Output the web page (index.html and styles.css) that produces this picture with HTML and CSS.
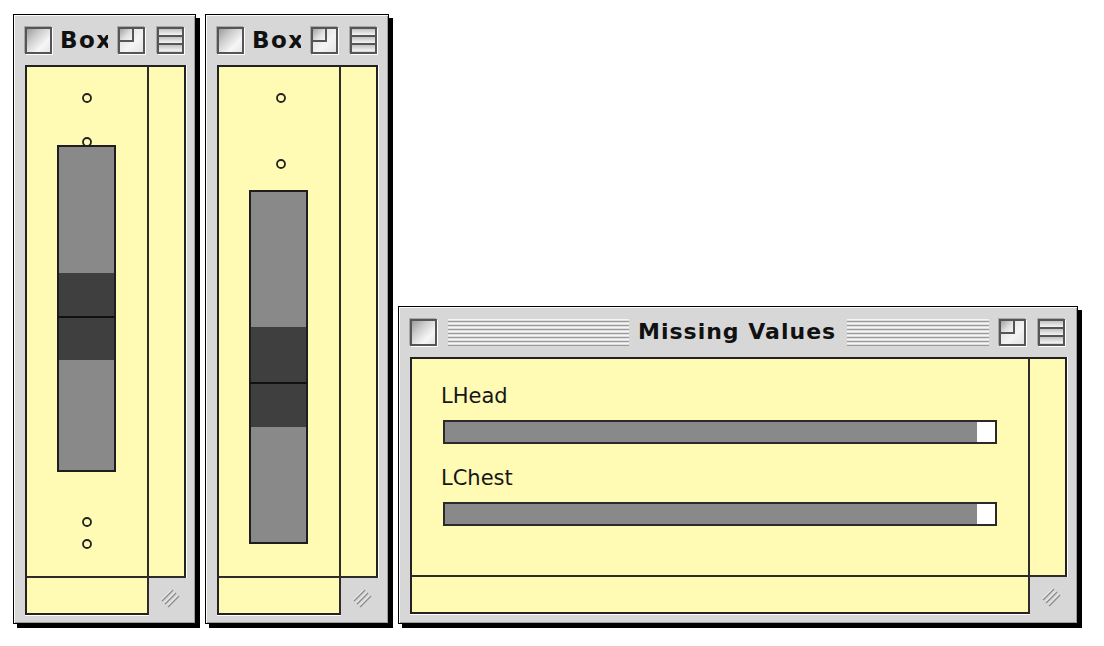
FILE: index.html
```html
<!DOCTYPE html>
<html>
<head>
<meta charset="utf-8">
<link rel="stylesheet" href="styles.css">
</head>
<body>
<div class="win win1">
  <div class="tb">
    <div class="btn cbox"></div>
    <div class="ttl ttl-clip"><span class="title title-wide">Box</span></div>
    <div class="btn zbox"><div class="zin"></div></div>
    <div class="btn sbox"><i></i><i></i><i></i></div>
  </div>
  <div class="content">
    <div class="pane">
      <svg class="plot" width="120" height="509" viewBox="0 0 120 509">
        <rect x="31" y="79" width="57" height="325" fill="#898989" stroke="#1e1e1e" stroke-width="2"/>
        <rect x="32" y="206" width="55" height="87" fill="#3f3f3f"/>
        <line x1="31" y1="250" x2="88" y2="250" stroke="#111" stroke-width="2"/>
        <circle cx="60" cy="31" r="4" fill="none" stroke="#222" stroke-width="1.8"/>
        <circle cx="60" cy="75" r="4" fill="none" stroke="#222" stroke-width="1.8"/>
        <circle cx="60" cy="455" r="4" fill="none" stroke="#222" stroke-width="1.8"/>
        <circle cx="60" cy="477" r="4" fill="none" stroke="#222" stroke-width="1.8"/>
      </svg>
    </div>
    <div class="vtrack"></div>
    <div class="htrack"></div>
    <div class="grow"><svg width="22" height="22" viewBox="0 0 22 22"><g stroke-width="1.4"><line x1="3" y1="13" x2="13" y2="3" stroke="#fff"/><line x1="3" y1="14" x2="14" y2="3" stroke="#8a8a8a"/><line x1="6" y1="16" x2="16" y2="6" stroke="#fff"/><line x1="6" y1="17" x2="17" y2="6" stroke="#8a8a8a"/><line x1="9" y1="19" x2="19" y2="9" stroke="#fff"/><line x1="9" y1="20" x2="20" y2="9" stroke="#8a8a8a"/></g></svg></div>
  </div>
</div>

<div class="win win2">
  <div class="tb">
    <div class="btn cbox"></div>
    <div class="ttl ttl-clip"><span class="title title-wide">Box</span></div>
    <div class="btn zbox"><div class="zin"></div></div>
    <div class="btn sbox"><i></i><i></i><i></i></div>
  </div>
  <div class="content">
    <div class="pane">
      <svg class="plot" width="120" height="509" viewBox="0 0 120 509">
        <rect x="31" y="124" width="57" height="352" fill="#898989" stroke="#1e1e1e" stroke-width="2"/>
        <rect x="32" y="260" width="55" height="100" fill="#3f3f3f"/>
        <line x1="31" y1="316" x2="88" y2="316" stroke="#111" stroke-width="2"/>
        <circle cx="62" cy="31" r="4" fill="none" stroke="#222" stroke-width="1.8"/>
        <circle cx="62" cy="97" r="4" fill="none" stroke="#222" stroke-width="1.8"/>
      </svg>
    </div>
    <div class="vtrack"></div>
    <div class="htrack"></div>
    <div class="grow"><svg width="22" height="22" viewBox="0 0 22 22"><g stroke-width="1.4"><line x1="3" y1="13" x2="13" y2="3" stroke="#fff"/><line x1="3" y1="14" x2="14" y2="3" stroke="#8a8a8a"/><line x1="6" y1="16" x2="16" y2="6" stroke="#fff"/><line x1="6" y1="17" x2="17" y2="6" stroke="#8a8a8a"/><line x1="9" y1="19" x2="19" y2="9" stroke="#fff"/><line x1="9" y1="20" x2="20" y2="9" stroke="#8a8a8a"/></g></svg></div>
  </div>
</div>

<div class="win win3">
  <div class="tb">
    <div class="btn cbox"></div>
    <div class="ttl ttl-striped">
      <div class="stripes sl"></div>
      <span class="title">Missing Values</span>
      <div class="stripes sr"></div>
    </div>
    <div class="btn zbox"><div class="zin"></div></div>
    <div class="btn sbox sbox-w"><i></i><i></i><i></i></div>
  </div>
  <div class="content">
    <div class="pane pane-form">
      <div class="label">LHead</div>
      <div class="bar"><div class="fill"></div><div class="end"></div></div>
      <div class="label label-next">LChest</div>
      <div class="bar"><div class="fill"></div><div class="end"></div></div>
    </div>
    <div class="vtrack"></div>
    <div class="htrack"></div>
    <div class="grow"><svg width="22" height="22" viewBox="0 0 22 22"><g stroke-width="1.4"><line x1="3" y1="13" x2="13" y2="3" stroke="#fff"/><line x1="3" y1="14" x2="14" y2="3" stroke="#8a8a8a"/><line x1="6" y1="16" x2="16" y2="6" stroke="#fff"/><line x1="6" y1="17" x2="17" y2="6" stroke="#8a8a8a"/><line x1="9" y1="19" x2="19" y2="9" stroke="#fff"/><line x1="9" y1="20" x2="20" y2="9" stroke="#8a8a8a"/></g></svg></div>
  </div>
</div>
</body>
</html>
```

FILE: styles.css
```css
* { box-sizing: border-box; }
html, body { margin: 0; padding: 0; background: #fff; }
body {
  width: 1104px;
  height: 646px;
  position: relative;
  overflow: hidden;
  font-family: "DejaVu Sans", "Liberation Sans", sans-serif;
  color: #111;
}

.win {
  position: absolute;
  display: flex;
  flex-direction: column;
  background: #d7d7d7;
  border: 1px solid #000;
  box-shadow: 4px 4px 0 #000, inset 1px 1px 0 #fafafa, inset -1px -1px 0 #9c9c9c;
  padding: 0 10px 9px 11px;
}
.win1 { left: 13px; top: 14px; width: 183px; height: 610px; }
.win2 { left: 205px; top: 14px; width: 184px; height: 610px; }
.win3 { left: 398px; top: 306px; width: 680px; height: 318px; }

.tb {
  height: 50px;
  flex: none;
  display: flex;
  align-items: center;
}

.btn {
  flex: none;
  width: 27px;
  height: 27px;
  border: 2px solid #555;
  box-shadow: 1px 1px 0 #fff, -1px -1px 0 #a8a8a8;
  overflow: hidden;
}
.cbox {
  background: linear-gradient(135deg, #9c9c9c 0%, #cfcfcf 35%, #f6f6f6 70%, #e6e6e6 100%);
}
.zbox {
  background: linear-gradient(135deg, #d8d8d8 0%, #f4f4f4 60%, #e4e4e4 100%);
}
.zin {
  width: 60%;
  height: 60%;
  border-right: 2px solid #555;
  border-bottom: 2px solid #555;
  background: linear-gradient(135deg, #a4a4a4 0%, #e2e2e2 60%, #f4f4f4 100%);
}
.sbox {
  margin-left: 12px;
  margin-right: 1px;
  display: flex;
  flex-direction: column;
}
.sbox-w { margin-right: 2px; }
.sbox i {
  flex: 1;
  display: block;
  background: linear-gradient(to bottom, #c2c2c2, #f4f4f4);
}
.sbox i + i { border-top: 2px solid #555; }

.ttl {
  flex: 1;
  min-width: 0;
  display: flex;
  align-items: center;
  overflow: hidden;
  white-space: nowrap;
}
.ttl-clip { margin: 0 10px 0 8px; }
.ttl-striped { margin: 0 10px 0 11px; }

.title {
  flex: none;
  font-family: "DejaVu Sans", sans-serif;
  font-weight: bold;
  font-size: 22px;
  letter-spacing: 1px;
  color: #111;
  line-height: 26px;
}
.title-wide { font-size: 23px; letter-spacing: 1.5px; }
.ttl-striped .title { margin: 0 11px 0 9px; }

.stripes {
  flex-basis: 0;
  height: 27px;
  background: repeating-linear-gradient(to bottom, #f6f6f6 0 1px, #dedede 1px 2px, #9a9a9a 2px 3px, #dedede 3px 4px);
}
.sl { flex-grow: 180; }
.sr { flex-grow: 141; }

.content {
  flex: 1;
  min-height: 0;
  display: grid;
  grid-template-columns: 1fr 37px;
  grid-template-rows: 1fr 37px;
}
.pane {
  grid-column: 1;
  grid-row: 1;
  position: relative;
  background: #fffbb4;
  border-left: 2px solid #222;
  border-top: 2px solid #222;
  border-right: 2px solid #2c2c2c;
  border-bottom: 2px solid #2c2c2c;
}
.plot { display: block; }
.vtrack {
  grid-column: 2;
  grid-row: 1;
  background: #fffbb4;
  border-top: 2px solid #222;
  border-right: 2px solid #222;
  border-bottom: 2px solid #2c2c2c;
  box-shadow: 1px 0 0 #fff;
}
.htrack {
  grid-column: 1;
  grid-row: 2;
  background: #fffbb4;
  border-left: 2px solid #222;
  border-bottom: 2px solid #222;
  border-right: 2px solid #2c2c2c;
  box-shadow: 0 1px 0 #fff;
}
.grow {
  grid-column: 2;
  grid-row: 2;
  display: flex;
  align-items: center;
  justify-content: center;
  padding: 3px 0 0 4px;
}

.pane-form {
  padding: 25px 31px 0 29px;
}
.label {
  font-family: "DejaVu Sans", sans-serif;
  font-size: 21px;
  line-height: 24px;
  color: #161616;
}
.label-next { margin-top: 22px; }
.bar {
  margin: 12px 0 0 2px;
  height: 24px;
  border: 2px solid #2a2a2a;
  display: flex;
}
.fill { flex: 1; background: #898989; }
.end { width: 18px; background: #fff; }
```
